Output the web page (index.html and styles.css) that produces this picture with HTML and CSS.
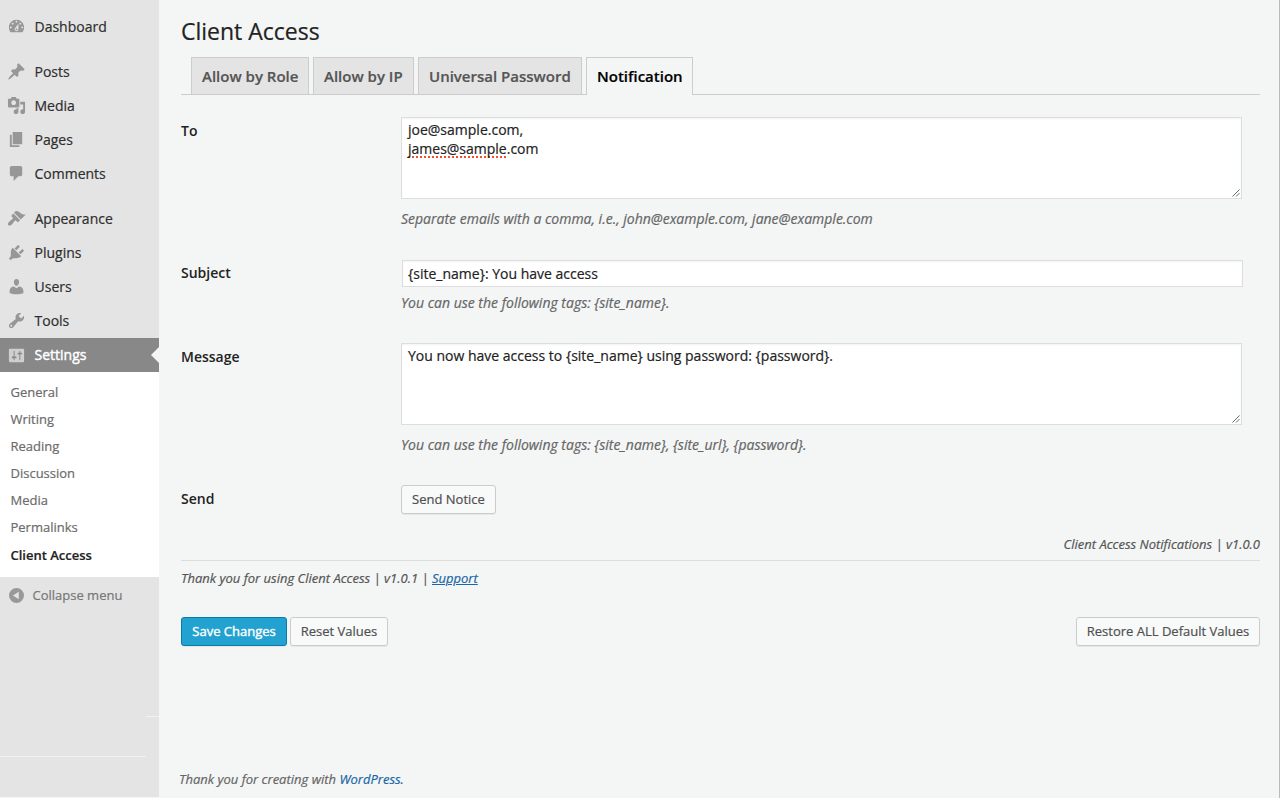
FILE: index.html
```html
<!DOCTYPE html>
<html lang="en">
<head>
<meta charset="utf-8">
<title>Client Access</title>
<link rel="stylesheet" href="styles.css">
</head>
<body>
<div class="page">
  <aside class="sidebar">
    <nav class="menu">
      <a class="item"><svg viewBox="0 0 20 20"><path d="M3.76 16h12.48c1.1-1.37 1.76-3.11 1.76-5 0-4.42-3.58-8-8-8s-8 3.58-8 8c0 1.89.66 3.63 1.76 5zM10 4c.55 0 1 .45 1 1s-.45 1-1 1-1-.45-1-1 .45-1 1-1zM6 6c.55 0 1 .45 1 1s-.45 1-1 1-1-.45-1-1 .45-1 1-1zm8 0c.55 0 1 .45 1 1s-.45 1-1 1-1-.45-1-1 .45-1 1-1zm-5.37 5.55L12 7v6c0 1.1-.9 2-2 2s-2-.9-2-2c0-.57.24-1.08.63-1.45zM4 10c.55 0 1 .45 1 1s-.45 1-1 1-1-.45-1-1 .45-1 1-1zm12 0c.55 0 1 .45 1 1s-.45 1-1 1-1-.45-1-1 .45-1 1-1zm-5 3c0-.55-.45-1-1-1s-1 .45-1 1 .45 1 1 1 1-.45 1-1z"/></svg><span>Dashboard</span></a>
      <a class="item spaced"><svg viewBox="0 0 20 20"><path d="M10.44 3.02l1.82-1.82 6.36 6.35-1.83 1.82c-1.05-.68-2.48-.57-3.41.36l-.75.75c-.92.93-1.04 2.35-.35 3.41l-1.83 1.82-2.41-2.41-2.8 2.79c-.42.42-3.38 2.71-3.8 2.29s1.86-3.39 2.28-3.81l2.79-2.79L4.1 9.36l1.83-1.82c1.05.69 2.48.57 3.4-.36l.75-.75c.93-.92 1.05-2.35.36-3.41z"/></svg><span>Posts</span></a>
      <a class="item"><svg viewBox="0 0 20 20"><path d="M13 11V4c0-.55-.45-1-1-1h-1.67L9 1H5L3.67 3H2c-.55 0-1 .45-1 1v7c0 .55.45 1 1 1h10c.55 0 1-.45 1-1zM7 4.5c1.38 0 2.5 1.12 2.5 2.5S8.38 9.5 7 9.5 4.5 8.38 4.5 7 5.62 4.5 7 4.5zM14 6h5v10.5c0 1.38-1.12 2.5-2.5 2.5S14 17.88 14 16.5s1.12-2.5 2.5-2.5c.17 0 .34.02.5.05V9h-3V6zm-4 8.05V13h2v3.5c0 1.38-1.12 2.5-2.5 2.5S7 17.88 7 16.5 8.12 14 9.5 14c.17 0 .34.02.5.05z"/></svg><span>Media</span></a>
      <a class="item"><svg viewBox="0 0 20 20"><path d="M6 15V2h10v13H6zm-1 1h8v2H3V5h2v11z"/></svg><span>Pages</span></a>
      <a class="item"><svg viewBox="0 0 20 20"><path d="M5 2h9c1.1 0 2 .9 2 2v7c0 1.1-.9 2-2 2h-2l-5 5v-5H5c-1.1 0-2-.9-2-2V4c0-1.1.9-2 2-2z"/></svg><span>Comments</span></a>
      <a class="item spaced"><svg viewBox="0 0 20 20"><path d="M14.48 11.06L7.41 3.99l1.5-1.5c.5-.56 2.3-.47 3.51.32 1.21.8 1.43 1.28 2.91 2.1 1.18.64 2.45 1.26 4.45.85zm-.71.71L6.7 4.7 4.93 6.47c-.39.39-.39 1.02 0 1.41l1.06 1.06c.39.39.39 1.03 0 1.42-.6.6-1.43 1.11-2.21 1.69-.35.26-.7.53-1.01.84C1.43 14.23.4 16.08 1.4 17.07c.99 1 2.84-.03 4.18-1.36.31-.31.58-.66.85-1.02.57-.78 1.08-1.61 1.69-2.21.39-.39 1.02-.39 1.41 0l1.06 1.06c.39.39 1.02.39 1.41 0z"/></svg><span>Appearance</span></a>
      <a class="item"><svg viewBox="0 0 20 20"><path d="M13.11 4.36L9.87 7.6 8 5.73l3.24-3.24c.35-.34 1.05-.2 1.56.32.52.51.66 1.21.31 1.55zm-8 1.77l.91-1.12 9.01 9.01-1.19.84c-.71.71-2.63 1.16-3.82 1.16H6.14L4.9 17.26c-.59.59-1.54.59-2.12 0-.59-.58-.59-1.53 0-2.12l1.24-1.24v-3.88c0-1.13.4-3.19 1.09-3.89zm7.26 3.97l3.24-3.24c.34-.35 1.04-.21 1.55.31.52.51.66 1.21.31 1.55l-3.24 3.25z"/></svg><span>Plugins</span></a>
      <a class="item"><svg viewBox="0 0 20 20"><path d="M10 9.25c-2.27 0-2.73-3.44-2.73-3.44C7 4.02 7.82 2 9.97 2c2.16 0 2.98 2.02 2.71 3.81 0 0-.41 3.44-2.68 3.44zm0 2.57L12.72 10c2.39 0 4.52 2.33 4.52 4.53v2.49s-3.65 1.13-7.24 1.13c-3.65 0-7.24-1.13-7.24-1.13v-2.49c0-2.25 1.94-4.48 4.47-4.48z"/></svg><span>Users</span></a>
      <a class="item"><svg viewBox="0 0 20 20"><path d="M16.68 9.77c-1.34 1.34-3.3 1.67-4.95.99l-5.41 6.52c-.99.99-2.59.99-3.58 0s-.99-2.59 0-3.57l6.52-5.42c-.68-1.65-.35-3.61.99-4.95 1.28-1.28 3.12-1.62 4.72-1.06l-2.89 2.89 2.82 2.82 2.86-2.87c.53 1.58.18 3.39-1.08 4.65zM3.81 16.21c.4.39 1.04.39 1.43 0 .4-.4.4-1.04 0-1.43-.39-.4-1.03-.4-1.43 0-.39.39-.39 1.03 0 1.43z"/></svg><span>Tools</span></a>
      <a class="item current"><svg viewBox="0 0 20 20"><path d="M18 16V4c0-.55-.45-1-1-1H3c-.55 0-1 .45-1 1v12c0 .55.45 1 1 1h14c.55 0 1-.45 1-1zM8 11h1c.55 0 1 .45 1 1s-.45 1-1 1H8v1.5c0 .28-.22.5-.5.5s-.5-.22-.5-.5V13H6c-.55 0-1-.45-1-1s.45-1 1-1h1V5.5c0-.28.22-.5.5-.5s.5.22.5.5V11zm5-2h-1c-.55 0-1-.45-1-1s.45-1 1-1h1V5.5c0-.28.22-.5.5-.5s.5.22.5.5V7h1c.55 0 1 .45 1 1s-.45 1-1 1h-1v5.5c0 .28-.22.5-.5.5s-.5-.22-.5-.5V9z"/></svg><span>Settings</span></a>
    </nav>
    <nav class="submenu">
      <a>General</a>
      <a>Writing</a>
      <a>Reading</a>
      <a>Discussion</a>
      <a>Media</a>
      <a>Permalinks</a>
      <a class="active">Client Access</a>
    </nav>
    <a class="collapse"><svg viewBox="0 0 16 16"><path fill-rule="evenodd" d="M8 0a8 8 0 1 1 0 16A8 8 0 0 1 8 0zM10.4 4v8L4.2 8z"/></svg><span>Collapse menu</span></a>
    <div class="seams"><i class="seam-right"></i><i class="seam-left"></i></div>
  </aside>
  <main class="content">
    <h1>Client Access</h1>
    <div class="tabs">
      <a class="tab role">Allow by Role</a>
      <a class="tab ip">Allow by IP</a>
      <a class="tab password">Universal Password</a>
      <a class="tab selected">Notification</a>
    </div>
    <div class="row row-to">
      <label>To</label>
      <div>
        <div class="area"><span class="line">joe@sample.com,</span><span class="line"><span class="misspelt">james@sample</span>.com</span><svg class="grip" viewBox="0 0 9 9"><path d="M.5 8.5l8-8M4.5 8.5l4-4"/></svg></div>
        <p class="hint">Separate emails with a comma, i.e., john@example.com, jane@example.com</p>
      </div>
    </div>
    <div class="row row-subject">
      <label>Subject</label>
      <div>
        <div class="input">{site_name}: You have access</div>
        <p class="hint">You can use the following tags: {site_name}.</p>
      </div>
    </div>
    <div class="row row-message">
      <label>Message</label>
      <div>
        <div class="area"><span class="line">You now have access to {site_name} using password: {password}.</span><svg class="grip" viewBox="0 0 9 9"><path d="M.5 8.5l8-8M4.5 8.5l4-4"/></svg></div>
        <p class="hint">You can use the following tags: {site_name}, {site_url}, {password}.</p>
      </div>
    </div>
    <div class="row row-send">
      <label>Send</label>
      <div><button class="btn send">Send Notice</button></div>
    </div>
    <p class="version">Client Access Notifications | v1.0.0</p>
    <p class="thanks">Thank you for using Client Access | v1.0.1 | <a class="support">Support</a></p>
    <div class="actions">
      <button class="btn primary">Save Changes</button>
      <button class="btn reset">Reset Values</button>
      <button class="btn restore">Restore ALL Default Values</button>
    </div>
    <footer class="footer">Thank you for creating with <a>WordPress.</a></footer>
  </main>
</div>
</body>
</html>
```

FILE: styles.css
```css
* { box-sizing: border-box; }
body {
  margin: 0;
  background: #f4f6f6;
  font-family: "Open Sans", sans-serif;
  font-size: 13px;
  color: #222;
  -webkit-text-stroke: .2px currentColor;
}
p, h1 { margin: 0; }
.page { display: flex; height: 798px; overflow: hidden; border-right: 1px solid #b9baba; }

.sidebar { width: 159px; height: 797px; flex: none; background: #e4e4e4; display: flex; flex-direction: column; }
.menu { padding-top: 9px; }
.item { display: flex; align-items: center; height: 34px; padding-left: 7px; font-size: 14px; line-height: 20px; color: #2e2e2e; }
.item span { padding-top: 1px; }
.item svg { width: 19px; height: 19px; margin-right: 8.5px; fill: #979797; flex: none; }
.spaced { margin-top: 11px; }
.current { position: relative; margin-top: 1px; background: #888; color: #fff; -webkit-text-stroke: .4px #fff; }
.current span { padding-top: 0; }
.current svg { fill: #cfcfcf; }
.current::after { content: ""; position: absolute; right: 0; top: 9px; border: 8px solid transparent; border-left: 0; border-right-color: #f4f6f6; }
.submenu { display: flex; flex-direction: column; height: 205px; padding: 7px 0 0 10.5px; background: #fff; }
.submenu a { height: 27px; line-height: 27px; color: #6b6b6b; }
.submenu .active { padding-top: 1px; color: #222; font-weight: 600; }
.collapse { display: flex; align-items: center; height: 36px; padding-left: 9px; color: #777; }
.collapse span { padding-bottom: 1px; }
.collapse svg { width: 15px; height: 15px; margin-right: 8.5px; fill: #999; }
.seams { padding-top: 103px; display: flex; flex-direction: column; }
.seams i { height: 1px; background: #f1f1f1; }
.seam-right { width: 13px; align-self: flex-end; }
.seam-left { width: 146px; margin-top: 39px; }

.content { flex: 1; padding: 14px 19px 0 22px; display: flex; flex-direction: column; }
h1 { font-size: 23px; line-height: 34px; font-weight: 400; height: 43px; }
.tabs { display: flex; gap: 4px; height: 38px; padding-left: 10px; border-bottom: 1px solid #ccc; }
.tab { height: 37px; padding-left: 10px; border: 1px solid #ccc; border-bottom: 0; background: #e4e4e4; color: #555; font-size: 15px; line-height: 36px; font-weight: 600; white-space: nowrap; }
.role { width: 118px; }
.ip { width: 101px; }
.password { width: 164px; }
.selected { width: 107px; height: 38px; background: #f4f6f6; color: #000; }
.row { display: grid; grid-template-columns: 220px 842px; }
.row label { font-size: 14px; line-height: 20px; font-weight: 600; -webkit-text-stroke: 0; }
.row-to { height: 143px; padding-top: 22px; }
.row-to label, .row-message label { padding-top: 4px; }
.row-subject { height: 83px; padding-top: 22px; }
.row-subject label { padding-top: 3px; }
.row-message { height: 164px; padding-top: 22px; }
.row-send { height: 50px; }
.row-send label { padding-top: 4px; }
.area { position: relative; width: 841px; height: 82px; padding: 2px 6px; background: #fff; border: 1px solid #ddd; box-shadow: inset 0 1px 2px rgba(0,0,0,.05); }
.line { display: block; height: 19px; line-height: 19px; font-size: 14px; }
.misspelt { text-decoration: underline dotted #f04e30 2px; text-underline-offset: 2px; text-decoration-skip-ink: none; }
.grip { position: absolute; right: 1px; bottom: 1px; width: 8px; height: 8px; stroke: #555; fill: none; }
.input { width: 841px; height: 27px; margin-left: 1px; padding-left: 5px; border: 1px solid #ddd; background: #fff; font-size: 14px; line-height: 25px; box-shadow: inset 0 1px 2px rgba(0,0,0,.05); }
.hint { font-size: 14px; font-style: italic; line-height: 20px; margin-top: 10px; color: #666; }
.row-subject .hint { margin-top: 6px; }
.btn { height: 29px; padding: 0; border: 1px solid #ccc; border-radius: 3px; background: #f8f9f9; box-shadow: 0 1px 0 rgba(0,0,0,.06); color: #505050; font: 13px/26px "Open Sans", sans-serif; white-space: nowrap; -webkit-text-stroke: .2px currentColor; }
.send { width: 95px; }
.btn { padding-bottom: 1px; }
.version { height: 26px; text-align: right; font-style: italic; line-height: 18px; color: #555; border-bottom: 1px solid #ddd; }
.thanks { margin-top: 7px; font-style: italic; line-height: 20px; color: #555; }
.support { color: #1c66a5; text-decoration: underline; }
.actions { display: flex; margin-top: 29px; }
.primary { width: 106px; margin-right: 3px; border-color: #0a7aab; background: #22a2d0; color: #fff; -webkit-text-stroke: .4px #fff; }
.reset { width: 98px; }
.restore { width: 184px; margin-left: auto; }
.footer { margin: 123px 0 0 -2px; font-style: italic; line-height: 20px; color: #666; }
.footer a { color: #1c66a5; }
```
